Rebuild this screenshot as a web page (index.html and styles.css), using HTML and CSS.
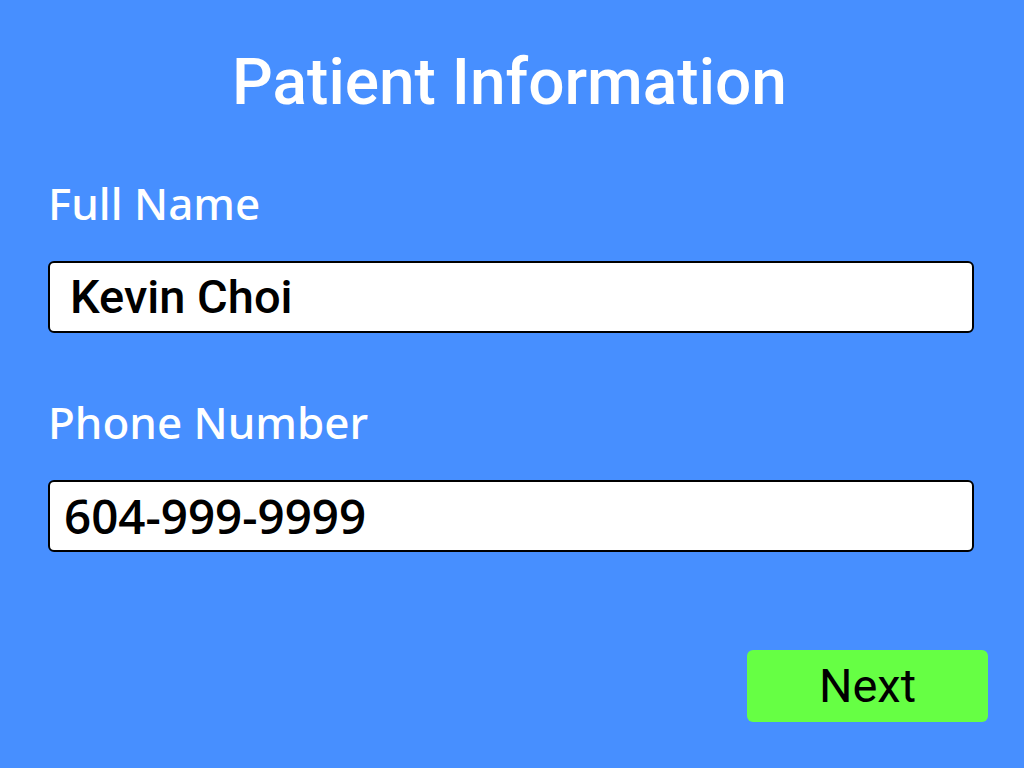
FILE: index.html
```html
<!DOCTYPE html>
<html>
<head>
<meta charset="utf-8">
<link rel="stylesheet" href="styles.css">
</head>
<body>
<main class="screen">
  <h1 class="title">Patient Information</h1>
  <form class="form">
    <label class="field">
      <span class="label">Full Name</span>
      <span class="input input-name">Kevin Choi</span>
    </label>
    <label class="field field-phone">
      <span class="label">Phone Number</span>
      <span class="input input-phone">604-999-9999</span>
    </label>
  </form>
  <div class="actions">
    <button class="next" type="button">Next</button>
  </div>
</main>
</body>
</html>
```
FILE: styles.css
```css
html, body {
  margin: 0;
  padding: 0;
}
body {
  background: #478fff;
  width: 1024px;
  height: 768px;
  overflow: hidden;
}
.screen {
  display: flex;
  flex-direction: column;
  height: 768px;
  box-sizing: border-box;
  padding: 0 36px 0 48px;
}
.title {
  margin: 45px 0 0 0;
  font-family: Roboto, sans-serif;
  font-weight: 500;
  font-size: 64px;
  line-height: 76px;
  color: #fff;
  text-align: center;
  padding-right: 17px;
}
.form {
  display: flex;
  flex-direction: column;
  gap: 61px;
  margin-top: 54px;
  padding-right: 14px;
}
.field {
  display: flex;
  flex-direction: column;
  gap: 30px;
}
.label {
  font-family: "Noto Sans", sans-serif;
  font-weight: 500;
  font-size: 44px;
  line-height: 56px;
  color: #fff;
}
.input {
  display: block;
  height: 72px;
  box-sizing: border-box;
  background: #fff;
  border: 2px solid #000;
  border-radius: 6px;
  color: #000;
  line-height: 68px;
}
.input-name {
  font-family: Roboto, sans-serif;
  font-weight: 500;
  font-size: 47px;
  padding-left: 20px;
}
.input-phone {
  font-family: "Open Sans", sans-serif;
  font-weight: 600;
  font-size: 47.5px;
  padding-left: 14px;
}
.actions {
  display: flex;
  justify-content: flex-end;
  margin-top: 98px;
}
.next {
  width: 241px;
  height: 72px;
  background: #66ff44;
  border: none;
  border-radius: 6px;
  font-family: Roboto, sans-serif;
  font-size: 47px;
  color: #000;
  padding: 0;
  line-height: 72px;
}
```
